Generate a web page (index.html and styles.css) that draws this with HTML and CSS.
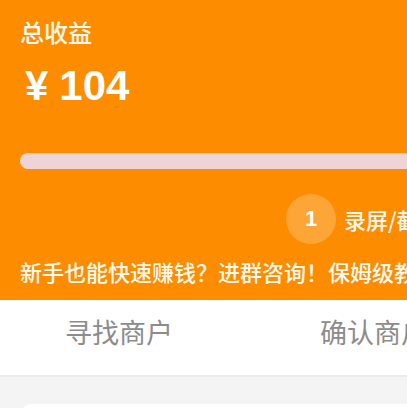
FILE: index.html
```html
<!DOCTYPE html>
<html lang="zh-CN">
<head>
<meta charset="utf-8">
<link rel="stylesheet" href="styles.css">
</head>
<body>
<div class="page">
  <header class="header">
    <div class="title">总收益</div>
    <div class="amount"><span class="yen">¥</span><span class="num">104</span></div>
    <div class="progress"></div>
    <div class="step">
      <span class="step-no">1</span>
      <span class="step-text">录屏/截图上传凭证</span>
    </div>
    <div class="notice">新手也能快速赚钱？进群咨询！保姆级教程带你轻松上手</div>
  </header>
  <nav class="tabs">
    <div class="tab">寻找商户</div>
    <div class="tab">确认商户</div>
  </nav>
  <main class="content">
    <div class="card"></div>
  </main>
</div>
</body>
</html>
```
FILE: styles.css
```css
html, body {
  margin: 0;
  padding: 0;
}
body {
  width: 407px;
  height: 408px;
  overflow: hidden;
  background: #f4f4f4;
  font-family: "Noto Sans CJK SC", "Noto Sans", sans-serif;
}
.page {
  width: 800px;
}
.header {
  background: #fe8c00;
  height: 300px;
  box-sizing: border-box;
  padding: 16px 0 0 20px;
  color: #fffaf0;
}
.title {
  font-size: 24px;
  line-height: 32px;
  font-weight: 500;
}
.amount {
  margin-top: 14px;
  display: flex;
  align-items: baseline;
  font-family: "Liberation Sans", Arial, sans-serif;
  font-weight: 700;
  font-size: 42px;
  line-height: 48px;
  color: #ffffff;
}
.yen {
  margin-left: 5px;
  margin-right: 11px;
}
.progress {
  margin-top: 43px;
  width: 760px;
  height: 16px;
  border-radius: 8px;
  background: #eed4d7;
}
.step {
  margin-top: 25px;
  margin-left: 266px;
  display: flex;
  align-items: center;
  gap: 8px;
}
.step-no {
  width: 50px;
  height: 50px;
  border-radius: 50%;
  background: rgba(255, 255, 255, 0.22);
  display: flex;
  align-items: center;
  justify-content: center;
  font-family: "Liberation Sans", Arial, sans-serif;
  font-weight: 700;
  font-size: 22px;
  color: #fff;
}
.step-text {
  font-size: 22px;
  font-weight: 500;
}
.notice {
  margin-top: 12px;
  font-size: 22px;
  line-height: 30px;
  font-weight: 500;
  white-space: nowrap;
}
.tabs {
  background: #fff;
  height: 63px;
  padding-bottom: 12px;
  border-bottom: 2px solid #ebebeb;
  display: flex;
  align-items: center;
}
.tab {
  font-size: 27px;
  color: #8c8c8c;
  width: 255px;
  box-sizing: border-box;
  padding-left: 65px;
}
.content {
  padding: 27px 20px;
}
.card {
  background: #fff;
  border-radius: 12px;
  height: 200px;
}
```
